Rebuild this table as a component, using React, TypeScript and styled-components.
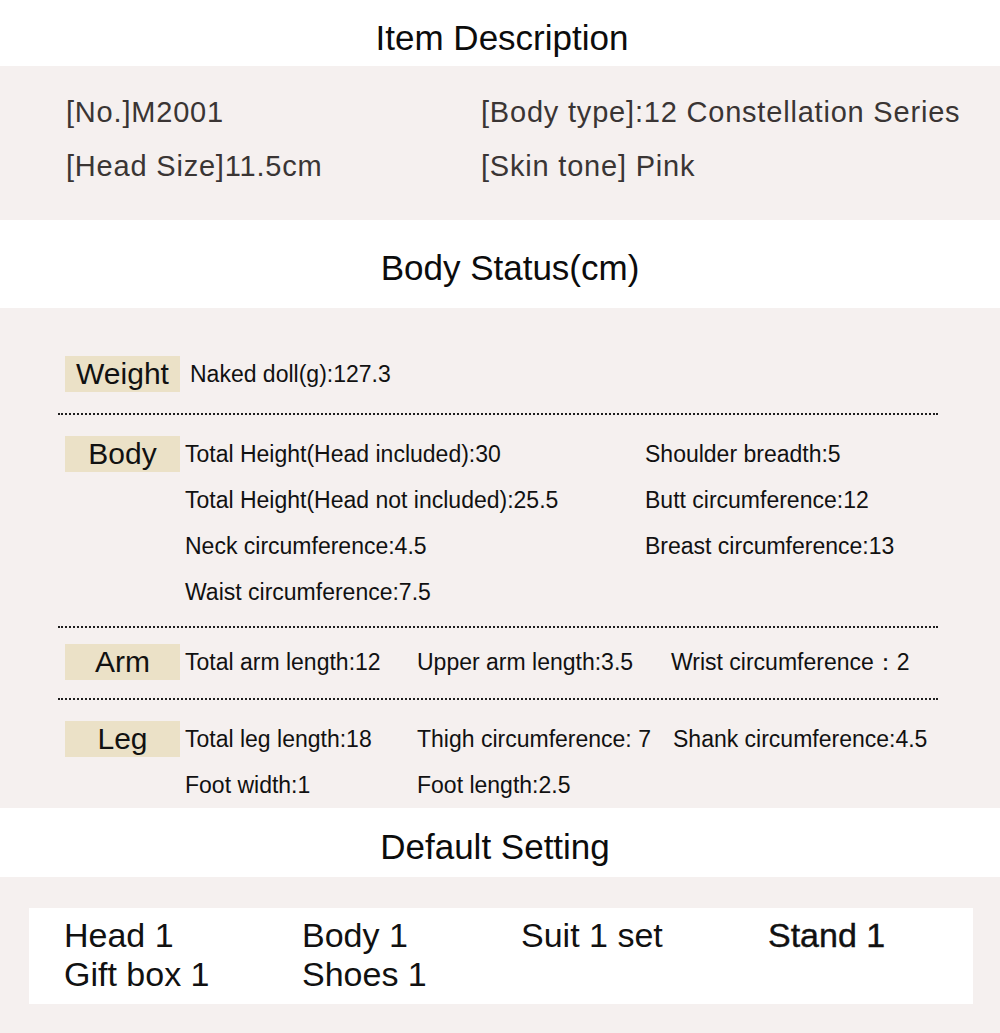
import styled, { createGlobalStyle } from "styled-components";

const GlobalStyle = createGlobalStyle`
  body {
    margin: 0;
    background: #ffffff;
    font-family: "Liberation Sans", Arial, sans-serif;
    color: #111;
  }
`;

const Page = styled.div`
  width: 1000px;
  display: flex;
  flex-direction: column;
`;

// section heading on white; $dx nudges the text off centre like the original image
const TitleBar = styled.div<{ $height: number; $shift?: number; $dx?: number }>`
  height: ${(p) => p.$height}px;
  background: #ffffff;
  display: flex;
  align-items: center;
  justify-content: center;
  padding-top: ${(p) => p.$shift ?? 0}px;
  padding-left: ${(p) => Math.max(0, (p.$dx ?? 0) * 2)}px;
  padding-right: ${(p) => Math.max(0, -(p.$dx ?? 0) * 2)}px;
  box-sizing: border-box;
  font-size: 35px;
  color: #0c0c0c;
`;

const Band = styled.section<{ $height: number }>`
  height: ${(p) => p.$height}px;
  background: #f5f0ef;
  box-sizing: border-box;
`;

const InfoGrid = styled.div`
  display: grid;
  grid-template-columns: 415px 1fr;
  padding: 19px 0 0 66px;
  line-height: 54px;
  font-size: 29px;
  letter-spacing: 0.8px;
  color: #3a3534;
  white-space: nowrap;
`;

const StatusBody = styled.div`
  display: flex;
  flex-direction: column;
  padding-top: 48px;
`;

const Row = styled.div`
  display: flex;
  align-items: flex-start;
  padding-left: 65px;
`;

const Label = styled.div`
  width: 115px;
  height: 36px;
  flex: none;
  background: #ebe1c7;
  display: flex;
  align-items: center;
  justify-content: center;
  font-size: 30px;
  color: #111;
`;

const Values = styled.div<{ $cols: string; $offset?: number }>`
  display: grid;
  grid-template-columns: ${(p) => p.$cols};
  grid-auto-rows: 36px;
  row-gap: 10px;
  margin-left: ${(p) => p.$offset ?? 5}px;
  font-size: 23px;
  line-height: 36px;
  color: #111;
  white-space: nowrap;
`;

const Divider = styled.hr<{ $above: number; $below: number }>`
  width: 880px;
  margin: ${(p) => p.$above}px 0 ${(p) => p.$below}px 58px;
  border: none;
  border-top: 2px dotted #1e1e1e;
  height: 0;
`;

const SetBox = styled.div`
  margin: 31px 27px 0 29px;
  height: 96px;
  background: #ffffff;
  box-sizing: border-box;
  padding: 8px 0 0 35px;
  display: grid;
  grid-template-columns: 238px 219px 247px 1fr;
  grid-auto-rows: 39px;
  font-size: 34px;
  line-height: 39px;
  color: #111;
`;

const SetItem = styled.span<{ $strong?: boolean }>`
  -webkit-text-stroke: ${(p) => (p.$strong ? "0.4px #111" : "0")};
`;

export default function App() {
  return (
    <>
      <GlobalStyle />
      <Page>
        <TitleBar $height={66} $shift={10} $dx={2}>
          Item Description
        </TitleBar>
        <Band $height={154}>
          <InfoGrid>
            <span>[No.]M2001</span>
            <span>[Body type]:12 Constellation Series</span>
            <span>[Head Size]11.5cm</span>
            <span>[Skin tone] Pink</span>
          </InfoGrid>
        </Band>

        <TitleBar $height={88} $shift={8} $dx={10}>
          Body Status(cm)
        </TitleBar>
        <Band $height={500}>
          <StatusBody>
            <Row>
              <Label>Weight</Label>
              <Values $cols="auto" $offset={10}>
                <span>Naked doll(g):127.3</span>
              </Values>
            </Row>
            <Divider $above={21} $below={21} />
            <Row>
              <Label>Body</Label>
              <Values $cols="460px auto">
                <span>Total Height(Head included):30</span>
                <span>Shoulder breadth:5</span>
                <span>Total Height(Head not included):25.5</span>
                <span>Butt circumference:12</span>
                <span>Neck circumference:4.5</span>
                <span>Breast circumference:13</span>
                <span>Waist circumference:7.5</span>
              </Values>
            </Row>
            <Divider $above={16} $below={16} />
            <Row>
              <Label>Arm</Label>
              <Values $cols="232px 254px auto">
                <span>Total arm length:12</span>
                <span>Upper arm length:3.5</span>
                <span>Wrist circumference：2</span>
              </Values>
            </Row>
            <Divider $above={18} $below={21} />
            <Row>
              <Label>Leg</Label>
              <Values $cols="232px 256px auto">
                <span>Total leg length:18</span>
                <span>Thigh circumference: 7</span>
                <span>Shank circumference:4.5</span>
                <span>Foot width:1</span>
                <span>Foot length:2.5</span>
              </Values>
            </Row>
          </StatusBody>
        </Band>

        <TitleBar $height={69} $shift={8} $dx={-5}>
          Default Setting
        </TitleBar>
        <Band $height={156}>
          <SetBox>
            <SetItem>Head 1</SetItem>
            <SetItem>Body 1</SetItem>
            <SetItem>Suit 1 set</SetItem>
            <SetItem $strong>Stand 1</SetItem>
            <SetItem>Gift box 1</SetItem>
            <SetItem>Shoes 1</SetItem>
          </SetBox>
        </Band>
      </Page>
    </>
  );
}
